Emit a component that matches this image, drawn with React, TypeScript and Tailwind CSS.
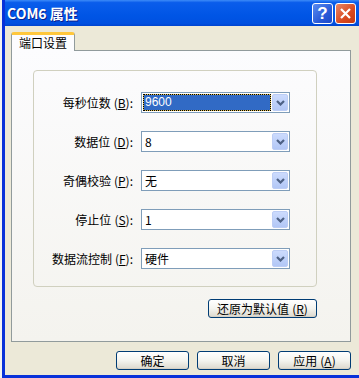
import React from "react";

const cjk = "font-['Noto_Sans_CJK_SC','Noto_Sans',sans-serif]";

function Chevron() {
  return (
    <svg width="9" height="6" viewBox="0 0 9 6">
      <path d="M1 1 L4.5 4.5 L8 1" fill="none" stroke="#4D6185" strokeWidth="2.2" />
    </svg>
  );
}

function Combo({ value, selected }: { value: string; selected?: boolean }) {
  return (
    <div className="w-[149px] h-[21px] border border-[#7F9DB9] bg-white flex items-center p-[1px] gap-[1px]">
      <div className="flex-1 h-full flex items-center">
        {selected ? (
          <div className="w-full h-full bg-[#E0C050] border border-dotted border-black">
            <div className="w-full h-full bg-[#316AC5] text-white text-[12px] leading-[15px] pl-[1px] font-['Liberation_Sans',sans-serif]">
              {value}
            </div>
          </div>
        ) : (
          <span className={`text-[12px] leading-none pl-[2px] text-black ${cjk}`}>{value}</span>
        )}
      </div>
      <div className="w-[16px] h-[17px] rounded-[2px] border border-[#BCCDF5] bg-gradient-to-b from-[#CCDBFD] to-[#B2C7F6] flex items-center justify-center">
        <Chevron />
      </div>
    </div>
  );
}

function Row({ label, mk, value, selected }: { label: string; mk: string; value: string; selected?: boolean }) {
  return (
    <div className="flex items-center h-[21px]">
      <div className={`w-[92px] text-right text-[12px] leading-none text-black ${cjk}`}>
        {label}
        <span className="ml-[3px]">(</span>
        <span className="underline">{mk}</span>
        <span>):</span>
      </div>
      <div className="ml-[8px]">
        <Combo value={value} selected={selected} />
      </div>
    </div>
  );
}

function XPButton({ children, w }: { children: React.ReactNode; w: string }) {
  return (
    <div
      className={`${w} h-[19px] rounded-[3px] border border-[#003C74] bg-gradient-to-b from-[#FFFFFF] via-[#F4F4EF] to-[#DCD8CD] flex items-center justify-center text-[12px] leading-none text-black ${cjk} shadow-[inset_0_-1px_0_#D6D0C5]`}
    >
      {children}
    </div>
  );
}

export default function App() {
  return (
    <div className="w-[359px] h-[378px] flex overflow-hidden bg-white">
      <div className="w-[2px] h-full bg-[#F2F2F2]" />
      <div className="flex-1 flex flex-col border-l-[3px] border-b-[3px] border-[#0831D9] bg-[#ECE9D8]">
        {/* title bar */}
        <div className="h-[26px] flex items-center bg-[linear-gradient(#3D8BF8_0%,#0A5DEB_10%,#0055E5_60%,#0050E0_90%,#0044CF_100%)] pl-[2px] pr-[3px]">
          <div className={`flex-1 text-white font-bold text-[14px] leading-none ${cjk} [text-shadow:1px_1px_0_#0A1E8C]`}>
            COM6 属性
          </div>
          <div className="w-[21px] h-[21px] rounded-[3px] border border-white bg-[linear-gradient(135deg,#5A8CF0,#2A5BD8_60%,#1C48C8)] flex items-center justify-center text-white font-bold text-[17px] leading-none font-['Liberation_Sans',sans-serif]">
            ?
          </div>
          <div className="w-[21px] h-[21px] ml-[2px] rounded-[3px] border border-white bg-[linear-gradient(135deg,#E8876A,#D9491F_60%,#C43A12)] flex items-center justify-center">
            <svg width="13" height="13" viewBox="0 0 13 13">
              <path d="M2 2 L11 11 M11 2 L2 11" stroke="white" strokeWidth="2.2" />
            </svg>
          </div>
        </div>
        {/* body */}
        <div className="flex-1 flex flex-col pl-[6px] pr-[5px]">
          <div className="mt-[6px] flex">
            <div className="w-[64px] h-[19px] bg-[#FCFCFE] border-x border-[#919B9C] rounded-t-[3px] border-t-[3px] border-t-[#FFC73C] relative z-10 -mb-[1px] flex items-center justify-center">
              <span className={`text-[12px] leading-none text-black ${cjk}`}>端口设置</span>
            </div>
          </div>
          <div className="w-[340px] h-[292px] border border-[#919B9C] bg-gradient-to-b from-[#FCFCFE] to-[#F4F3EE] flex flex-col">
            <div className="ml-[21px] mt-[19px] w-[284px] h-[217px] border border-[#D0D0BF] rounded-[4px] flex flex-col pt-[21px] pl-[7px] gap-[18px]">
              <Row label="每秒位数" mk="B" value="9600" selected />
              <Row label="数据位" mk="D" value="8" />
              <Row label="奇偶校验" mk="P" value="无" />
              <Row label="停止位" mk="S" value="1" />
              <Row label="数据流控制" mk="F" value="硬件" />
            </div>
            <div className="mt-[12px] w-[305px] flex justify-end">
              <XPButton w="w-[109px]">
                还原为默认值<span className="ml-[3px]">(</span><span className="underline">R</span>)
              </XPButton>
            </div>
          </div>
          <div className="mt-[9px] w-[340px] flex justify-end gap-[8px]">
            <XPButton w="w-[73px]">确定</XPButton>
            <XPButton w="w-[73px]">取消</XPButton>
            <XPButton w="w-[73px]">
              应用<span className="ml-[3px]">(</span><span className="underline">A</span>)
            </XPButton>
          </div>
        </div>
      </div>
    </div>
  );
}
